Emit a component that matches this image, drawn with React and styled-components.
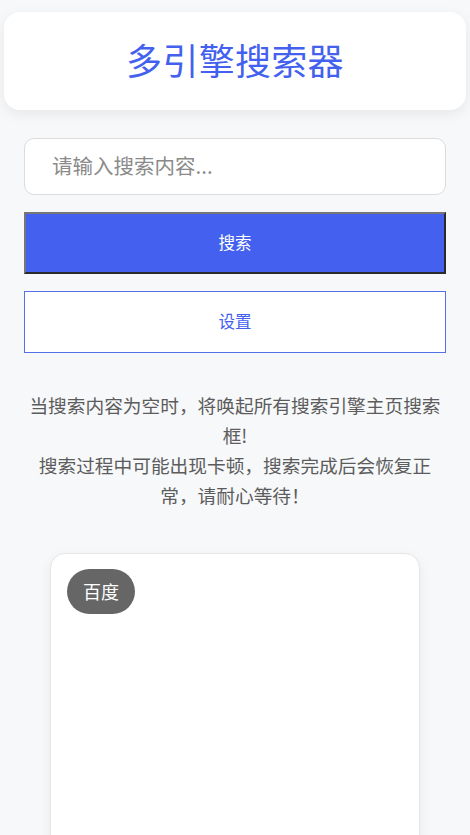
import React from "react";
import styled, { createGlobalStyle } from "styled-components";

const GlobalStyle = createGlobalStyle`
  body {
    margin: 0;
    background: #f7f8fa;
    font-family: "Noto Sans CJK SC", "Noto Sans", sans-serif;
  }
`;

const Page = styled.div`
  display: flex;
  flex-direction: column;
  min-height: 835px;
`;

const Header = styled.header`
  box-sizing: border-box;
  margin: 12px 4px 0;
  height: 98px;
  padding-bottom: 5px;
  display: flex;
  align-items: center;
  justify-content: center;
  background: #fff;
  border-radius: 16px;
  box-shadow: 0 4px 14px rgba(0, 0, 0, 0.07);
`;

const Title = styled.h1`
  margin: 0;
  font-size: 36px;
  font-weight: 400;
  color: #4361ee;
  letter-spacing: 0.3px;
`;

const Main = styled.main`
  display: flex;
  flex-direction: column;
  padding: 28px 24px 0;
`;

const SearchInput = styled.input`
  box-sizing: border-box;
  height: 57px;
  padding: 0 27px 3px;
  border: 1px solid #dcdcdc;
  border-radius: 10px;
  background: #fff;
  font-family: inherit;
  font-size: 20.5px;
  color: #333;
  outline: none;

  &::placeholder {
    color: #8a8a8a;
  }
`;

const Button = styled.button`
  box-sizing: border-box;
  height: 62px;
  margin-top: 17px;
  padding-bottom: 3px;
  font-family: inherit;
  font-size: 16.5px;
  cursor: pointer;
  background: ${(p) => (p.$primary ? "#4361ee" : "#fff")};
  color: ${(p) => (p.$primary ? "#fff" : "#4361ee")};
  border: ${(p) => (p.$primary ? "2px solid" : "1px solid #4f6ce8")};
  border-color: ${(p) =>
    p.$primary ? "#767676 #2b2b2b #2b2b2b #767676" : "#5571ea"};
`;

const Notice = styled.p`
  margin: 37px 0 0;
  font-size: 18.7px;
  line-height: 30px;
  color: #5c5c5c;
  text-align: center;
`;

const Results = styled.section`
  display: flex;
  justify-content: center;
  padding-top: 43px;
`;

const EngineCard = styled.div`
  box-sizing: border-box;
  width: 370px;
  height: 420px;
  padding: 15px 16px;
  background: #fff;
  border: 1px solid #e6e6e6;
  border-radius: 15px;
  box-shadow: 0 4px 14px rgba(0, 0, 0, 0.06);
`;

const Badge = styled.span`
  display: inline-flex;
  align-items: center;
  justify-content: center;
  box-sizing: border-box;
  width: 68px;
  height: 45px;
  padding-bottom: 2px;
  border-radius: 23px;
  background: #666;
  color: #fff;
  font-size: 18px;
`;

export default function App() {
  return (
    <Page>
      <GlobalStyle />
      <Header>
        <Title>多引擎搜索器</Title>
      </Header>
      <Main>
        <SearchInput placeholder="请输入搜索内容..." />
        <Button $primary>搜索</Button>
        <Button>设置</Button>
        <Notice>
          当搜索内容为空时，将唤起所有搜索引擎主页搜索框!
          <br />
          搜索过程中可能出现卡顿，搜索完成后会恢复正常，请耐心等待！
        </Notice>
      </Main>
      <Results>
        <EngineCard>
          <Badge>百度</Badge>
        </EngineCard>
      </Results>
    </Page>
  );
}
